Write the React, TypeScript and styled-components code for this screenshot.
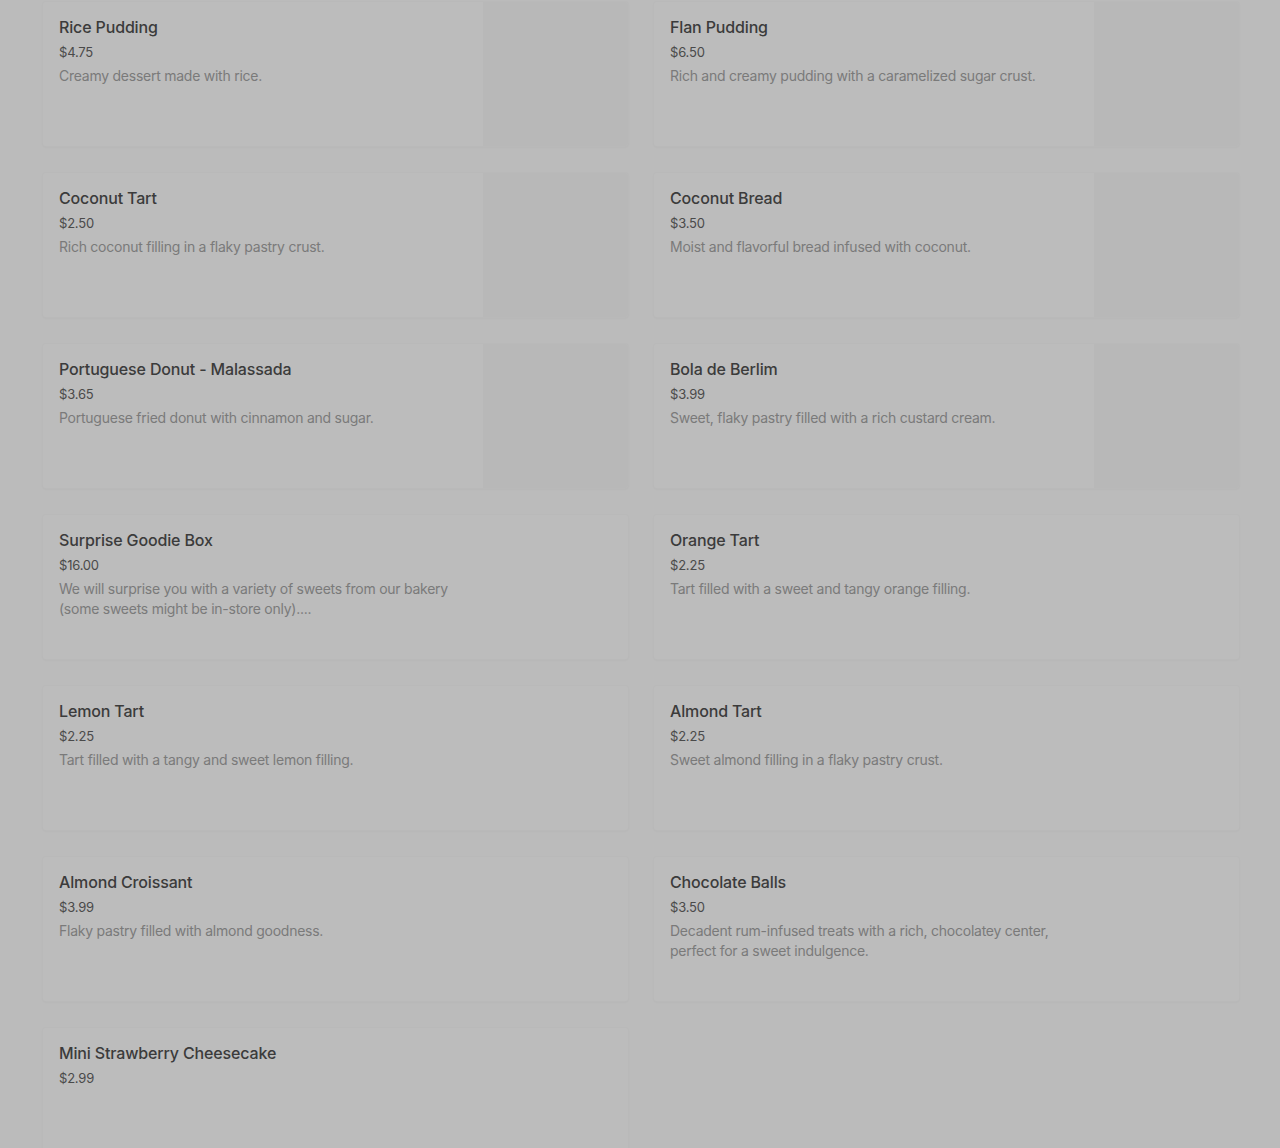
import React from 'react';
import styled, { createGlobalStyle } from 'styled-components';

interface itemType {
  name: string;
  price: string;
  description?: string;
  image?: boolean;
}

const items: itemType[] = [
  { name: 'Rice Pudding', price: '$4.75', description: 'Creamy dessert made with rice.', image: true },
  { name: 'Flan Pudding', price: '$6.50', description: 'Rich and creamy pudding with a caramelized sugar crust.', image: true },
  { name: 'Coconut Tart', price: '$2.50', description: 'Rich coconut filling in a flaky pastry crust.', image: true },
  { name: 'Coconut Bread', price: '$3.50', description: 'Moist and flavorful bread infused with coconut.', image: true },
  { name: 'Portuguese Donut - Malassada', price: '$3.65', description: 'Portuguese fried donut with cinnamon and sugar.', image: true },
  { name: 'Bola de Berlim', price: '$3.99', description: 'Sweet, flaky pastry filled with a rich custard cream.', image: true },
  {
    name: 'Surprise Goodie Box',
    price: '$16.00',
    description: 'We will surprise you with a variety of sweets from our bakery (some sweets might be in-store only)....',
  },
  { name: 'Orange Tart', price: '$2.25', description: 'Tart filled with a sweet and tangy orange filling.' },
  { name: 'Lemon Tart', price: '$2.25', description: 'Tart filled with a tangy and sweet lemon filling.' },
  { name: 'Almond Tart', price: '$2.25', description: 'Sweet almond filling in a flaky pastry crust.' },
  { name: 'Almond Croissant', price: '$3.99', description: 'Flaky pastry filled with almond goodness.' },
  {
    name: 'Chocolate Balls',
    price: '$3.50',
    description: 'Decadent rum-infused treats with a rich, chocolatey center, perfect for a sweet indulgence.',
  },
  { name: 'Mini Strawberry Cheesecake', price: '$2.99' },
];

export default function App() {
  return (
    <>
      <GlobalStyle />
      <Page>
        <Grid>
          {items.map((element) => (
            <Card key={element.name}>
              <Info>
                <Name>{element.name}</Name>
                <Price>{element.price}</Price>
                {element.description && <Description>{element.description}</Description>}
              </Info>
              {element.image && <Thumb />}
            </Card>
          ))}
        </Grid>
      </Page>
    </>
  );
}

const GlobalStyle = createGlobalStyle`
  html, body {
    margin: 0;
    background: #bbbbbb;
    font-family: Inter, "Noto Sans", sans-serif;
    overflow: hidden;
  }
`;
const Page = styled.div`
  width: 1280px;
  height: 1148px;
  padding: 1px 0 0 42px;
  box-sizing: border-box;
  background: #bbbbbb;
`;
const Grid = styled.div`
  width: 1198px;
  display: grid;
  grid-template-columns: 1fr 1fr;
  column-gap: 24px;
  row-gap: 25px;
`;
const Card = styled.div`
  height: 146px;
  display: flex;
  background: #bcbcbc;
  border: 1px solid rgba(0, 0, 0, 0.015);
  border-radius: 4px;
  box-shadow: 0 1px 2px rgba(0, 0, 0, 0.02);
  box-sizing: border-box;
  overflow: hidden;
`;
const Info = styled.div`
  flex: 1;
  padding: 15px 16px 0;
  min-width: 0;
`;
const Name = styled.div`
  font-size: 16px;
  line-height: 20px;
  font-weight: 500;
  color: #3b3b3b;
  letter-spacing: -0.15px;
`;
const Price = styled.div`
  margin-top: 5px;
  font-size: 13px;
  line-height: 20px;
  color: #4a4a4a;
  letter-spacing: -0.2px;
`;
const Description = styled.div`
  margin-top: 4px;
  max-width: 400px;
  font-size: 14px;
  line-height: 20px;
  color: #7a7a7a;
  letter-spacing: -0.25px;
`;
const Thumb = styled.div`
  flex: 0 0 145px;
  height: 100%;
  background: #b8b8b8;
`;
